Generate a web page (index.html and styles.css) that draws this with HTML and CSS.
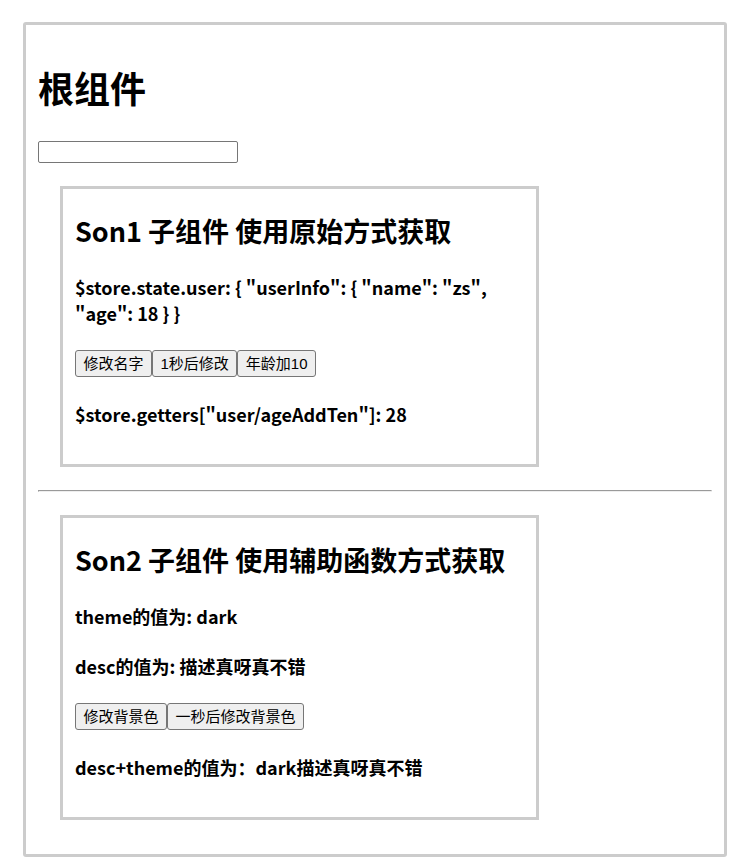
FILE: index.html
```html
<!DOCTYPE html>
<html lang="zh">

<head>
    <meta charset="UTF-8">
    <meta name="viewport" content="width=device-width, initial-scale=1.0">
    <title>Vuex Demo</title>
    <link rel="stylesheet" href="styles.css">
</head>

<body>
    <div class="app">
        <h1>根组件</h1>
        <input type="text" class="root-input">

        <div class="son">
            <h2>Son1 子组件 使用原始方式获取</h2>
            <h3>$store.state.user: { "userInfo": { "name": "zs", "age": 18 } }</h3>
            <div class="btns"><button>修改名字</button><button>1秒后修改</button><button>年龄加10</button></div>
            <h3>$store.getters["user/ageAddTen"]: 28</h3>
        </div>

        <hr>

        <div class="son">
            <h2>Son2 子组件 使用辅助函数方式获取</h2>
            <h3>theme的值为: dark</h3>
            <h3>desc的值为: 描述真呀真不错</h3>
            <div class="btns"><button>修改背景色</button><button>一秒后修改背景色</button></div>
            <h3>desc+theme的值为：dark描述真呀真不错</h3>
        </div>
    </div>
</body>

</html>
```

FILE: styles.css
```css
/* Global styles */
body {
    margin: 8px;
    font-family: "Noto Sans CJK SC", sans-serif;
    color: #000;
}

.app {
    margin: 14px 0 0 15px;
    width: 704px;
    box-sizing: border-box;
    border: 3px solid #ccc;
    border-radius: 3px;
    padding: 12px 12px 11px;
}

.app h1 {
    font-size: 36px;
    margin: 24px 0 0;
}

.root-input {
    display: block;
    width: 200px;
    height: 22px;
    box-sizing: border-box;
    margin: 28px 0 23px;
    border: 1px solid #767676;
    border-radius: 2px;
    padding: 1px 2px;
}

.app hr {
    margin: 0;
}

/* Child components */
.son {
    margin: 23px 0 23px 22px;
    width: 479px;
    box-sizing: border-box;
    border: 3px solid #ccc;
    padding: 0 12px 13px;
}

.son h2 {
    font-size: 27px;
    margin: 22px 0 24px;
}

.son h3 {
    font-size: 18px;
    margin: 24px 0;
}

.btns {
    display: flex;
}

.btns button {
    height: 27px;
    box-sizing: border-box;
    padding: 0 7.5px;
    font-family: "Liberation Sans", "Noto Sans CJK SC", sans-serif;
    font-size: 15px;
    line-height: 25px;
    color: #000;
    background-color: #efefef;
    border: 1px solid #767676;
    border-radius: 3px;
    cursor: pointer;
}

.btns button:hover {
    background-color: #e5e5e5;
}
```
